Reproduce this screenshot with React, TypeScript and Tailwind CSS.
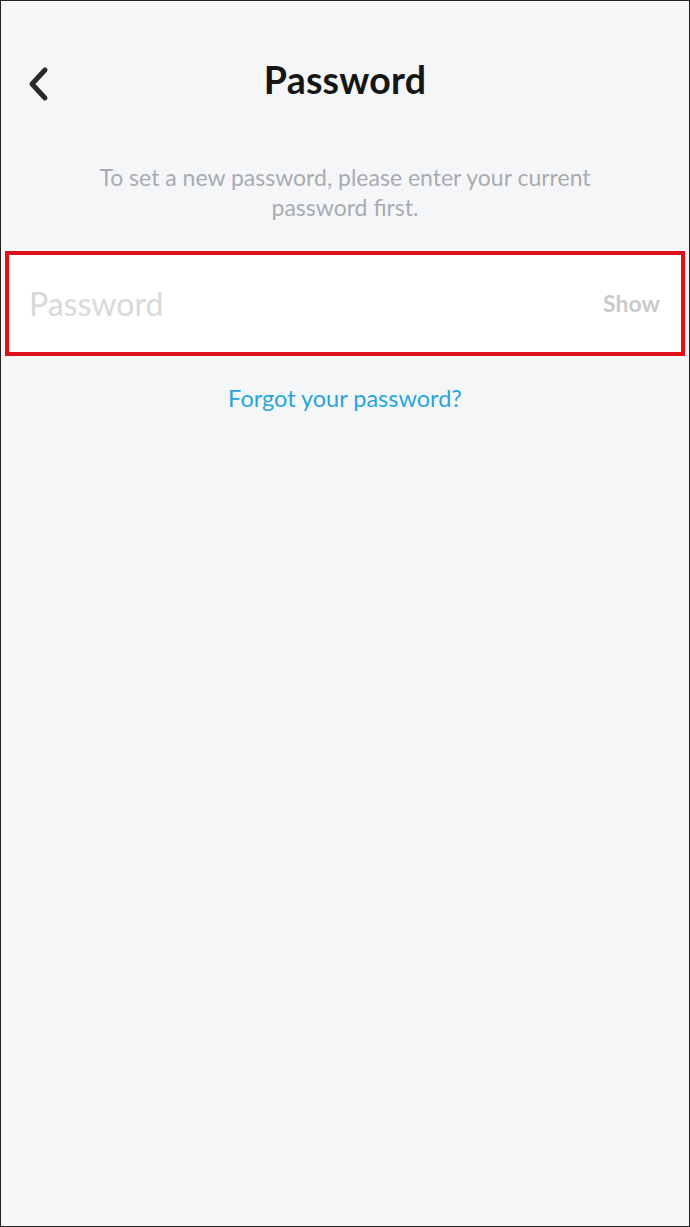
import React from "react";

export default function App() {
  return (
    <div
      className="h-[1227px] w-[690px] border border-[#222] bg-[#f5f6f8] box-border flex flex-col"
      style={{ fontFamily: "Lato, 'Noto Sans', sans-serif" }}
    >
      <div className="relative h-[64px] mt-[47px] flex items-center justify-center">
        <button className="absolute left-[23px] top-[18px] w-[28px] h-[36px] flex items-center justify-center">
          <svg width="26" height="36" viewBox="0 0 26 36" fill="none">
            <path d="M20 4 L7 18 L20 32" stroke="#2a2a2a" strokeWidth="5" strokeLinecap="round" strokeLinejoin="round" />
          </svg>
        </button>
        <h1 className="text-[37.5px] font-bold text-[#161616] tracking-[0.2px]">Password</h1>
      </div>
      <p className="mt-[50px] px-[60px] text-center text-[23px] leading-[30px] text-[#a8acb2]">
        To set a new password, please enter your current password first.
      </p>
      <div className="mt-[29px] mx-[4px] h-[105px] border-[4px] border-[#e0101a] bg-white flex items-center justify-between pl-[20px] pr-[21px]">
        <span className="text-[32px] text-[#d9d9d9]">Password</span>
        <span className="text-[23px] font-bold text-[#cacaca]">Show</span>
      </div>
      <div className="mt-[25px] text-center text-[23.5px] text-[#2aa5d9]">Forgot your password?</div>
    </div>
  );
}
